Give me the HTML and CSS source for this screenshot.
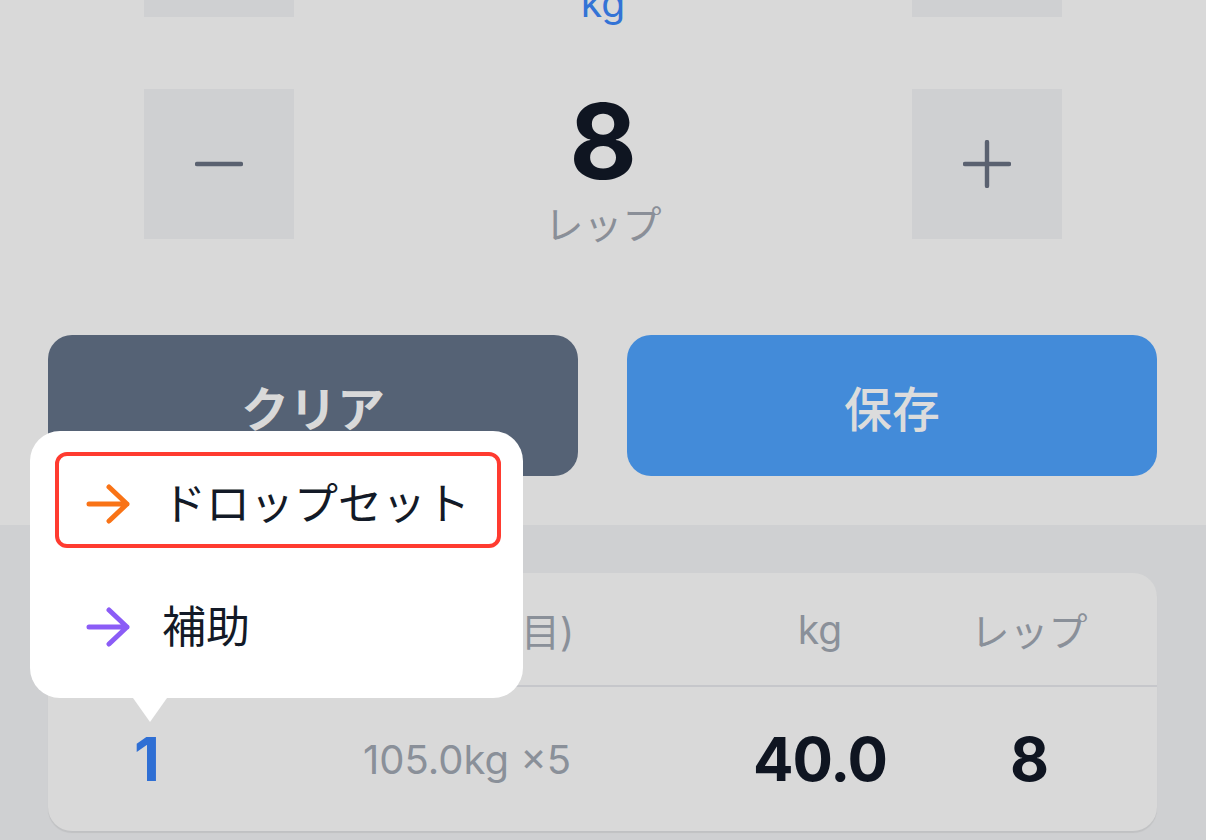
FILE: index.html
```html
<!DOCTYPE html>
<html lang="ja">
<head>
<meta charset="utf-8">
<title>セット入力</title>
<link rel="stylesheet" href="styles.css">
</head>
<body>
<div class="screen">
  <section class="editor">
    <div class="stepper stepper-cut">
      <div class="step-btn">
        <svg class="step-icon" viewBox="0 0 48 48"><path d="M2 24H46"/></svg>
      </div>
      <div class="readout">
        <div class="value">40.0</div>
        <div class="unit unit-blue">kg</div>
      </div>
      <div class="step-btn">
        <svg class="step-icon" viewBox="0 0 48 48"><path d="M2 24H46M24 2V46"/></svg>
      </div>
    </div>
    <div class="stepper">
      <div class="step-btn">
        <svg class="step-icon" viewBox="0 0 48 48"><path d="M2 24H46"/></svg>
      </div>
      <div class="readout">
        <div class="value">8</div>
        <div class="unit">レップ</div>
      </div>
      <div class="step-btn">
        <svg class="step-icon" viewBox="0 0 48 48"><path d="M2 24H46M24 2V46"/></svg>
      </div>
    </div>
    <div class="actions">
      <button class="btn btn-clear">クリア</button>
      <button class="btn btn-save">保存</button>
    </div>
  </section>

  <section class="history">
    <div class="card">
      <div class="grid-row thead">
        <div class="cell">セット</div>
        <div class="cell prev-head">前回(1回目)</div>
        <div class="cell">kg</div>
        <div class="cell">レップ</div>
      </div>
      <div class="grid-row tbody">
        <div class="cell set-no">1</div>
        <div class="cell prev">105.0kg ×5</div>
        <div class="cell num">40.0</div>
        <div class="cell num">8</div>
      </div>
    </div>
  </section>

  <div class="popover">
    <div class="menu-item is-marked">
      <svg class="arrow arrow-orange" viewBox="0 0 44 40"><path d="M3 20H41M23 3L41 20L23 37"/></svg>
      <span class="menu-label">ドロップセット</span>
    </div>
    <div class="menu-item">
      <svg class="arrow arrow-purple" viewBox="0 0 44 40"><path d="M3 20H41M23 3L41 20L23 37"/></svg>
      <span class="menu-label">補助</span>
    </div>
  </div>
</div>
</body>
</html>
```

FILE: styles.css
```css
* { box-sizing: border-box; }

html, body {
  margin: 0;
  padding: 0;
}

body {
  width: 1206px;
  height: 840px;
  overflow: hidden;
  background: #d9d9d9;
  font-family: "Inter", "Noto Sans CJK JP", sans-serif;
}

.screen {
  position: relative;
  width: 1206px;
  height: 840px;
  overflow: hidden;
  background: #d9d9d9;
}

/* ---------- editor ---------- */
.editor {
  padding: 0 49px 49px 48px;
  background: #d9d9d9;
}

.stepper {
  display: grid;
  grid-template-columns: 150px 1fr 150px;
  grid-template-rows: 150px;
  margin: 72px 95px 0 96px;
}

.stepper-cut {
  margin-top: -133px;
}

.step-btn {
  display: flex;
  align-items: center;
  justify-content: center;
  background: #cfd0d2;
}

.step-icon {
  width: 48px;
  height: 48px;
  fill: none;
  stroke: #5a6170;
  stroke-width: 4.4;
  stroke-linecap: round;
}

.readout {
  height: 150px;
  text-align: center;
}

.value {
  font-size: 104px;
  line-height: 104px;
  font-weight: 700;
  color: #0f1521;
}

.unit {
  margin-top: 9px;
  font-size: 39px;
  line-height: 1.2;
  color: #8a8f98;
}

.unit-blue {
  color: #3373d6;
}

.actions {
  display: grid;
  grid-template-columns: 1fr 1fr;
  gap: 49px;
  margin-top: 96px;
}

.btn {
  height: 141px;
  border: none;
  border-radius: 24px;
  font-family: inherit;
  font-size: 48px;
  font-weight: 700;
  color: #d9d9d9;
  display: flex;
  align-items: center;
  justify-content: center;
  padding: 0;
}

.btn-clear { background: #556275; }
.btn-save { background: #438bd9; color: #dcdcdc; font-weight: 500; }

/* ---------- history ---------- */
.history {
  height: 315px;
  padding: 48px 49px 0 48px;
  background: #cfd0d2;
}

.card {
  background: #d9d9d9;
  border-radius: 24px;
  box-shadow: 0 2px 1px rgba(0, 0, 0, 0.07);
  overflow: hidden;
}

.grid-row {
  display: grid;
  grid-template-columns: 198px 442px 264px 154px;
  align-items: center;
  text-align: center;
}

.thead {
  height: 114px;
  border-bottom: 2px solid #c6c7cb;
  font-size: 39px;
  color: #8a9099;
}

.prev-head {
  padding-left: 14px;
}

.tbody {
  height: 144px;
}

.set-no {
  font-size: 60px;
  font-weight: 700;
  color: #2f6fd4;
}

.prev {
  font-size: 40px;
  color: #8a9099;
}

.num {
  font-size: 60px;
  font-weight: 700;
  color: #0f1521;
  letter-spacing: -1px;
}

/* ---------- popover ---------- */
.popover {
  position: absolute;
  left: 30px;
  top: 431px;
  width: 493px;
  height: 267px;
  padding: 21px 22px 0 25px;
  background: #ffffff;
  border-radius: 30px;
  display: flex;
  flex-direction: column;
  gap: 31px;
}

.popover::after {
  content: "";
  position: absolute;
  left: 103px;
  top: 100%;
  width: 0;
  height: 0;
  border-left: 17px solid transparent;
  border-right: 17px solid transparent;
  border-top: 24px solid #ffffff;
}

.menu-item {
  display: flex;
  align-items: center;
  gap: 32px;
  height: 96px;
  padding-left: 27px;
  border: 4px solid transparent;
  border-radius: 12px;
}

.menu-item.is-marked {
  border-color: #ff3b30;
  padding-top: 8px;
}

.arrow {
  width: 44px;
  height: 40px;
  flex: none;
  fill: none;
  stroke-width: 5;
  stroke-linecap: round;
  stroke-linejoin: round;
}

.arrow-orange { stroke: #f97316; }
.arrow-purple { stroke: #8b5cf6; }

.menu-label {
  font-size: 44px;
  line-height: 1.2;
  color: #131a27;
}
```
